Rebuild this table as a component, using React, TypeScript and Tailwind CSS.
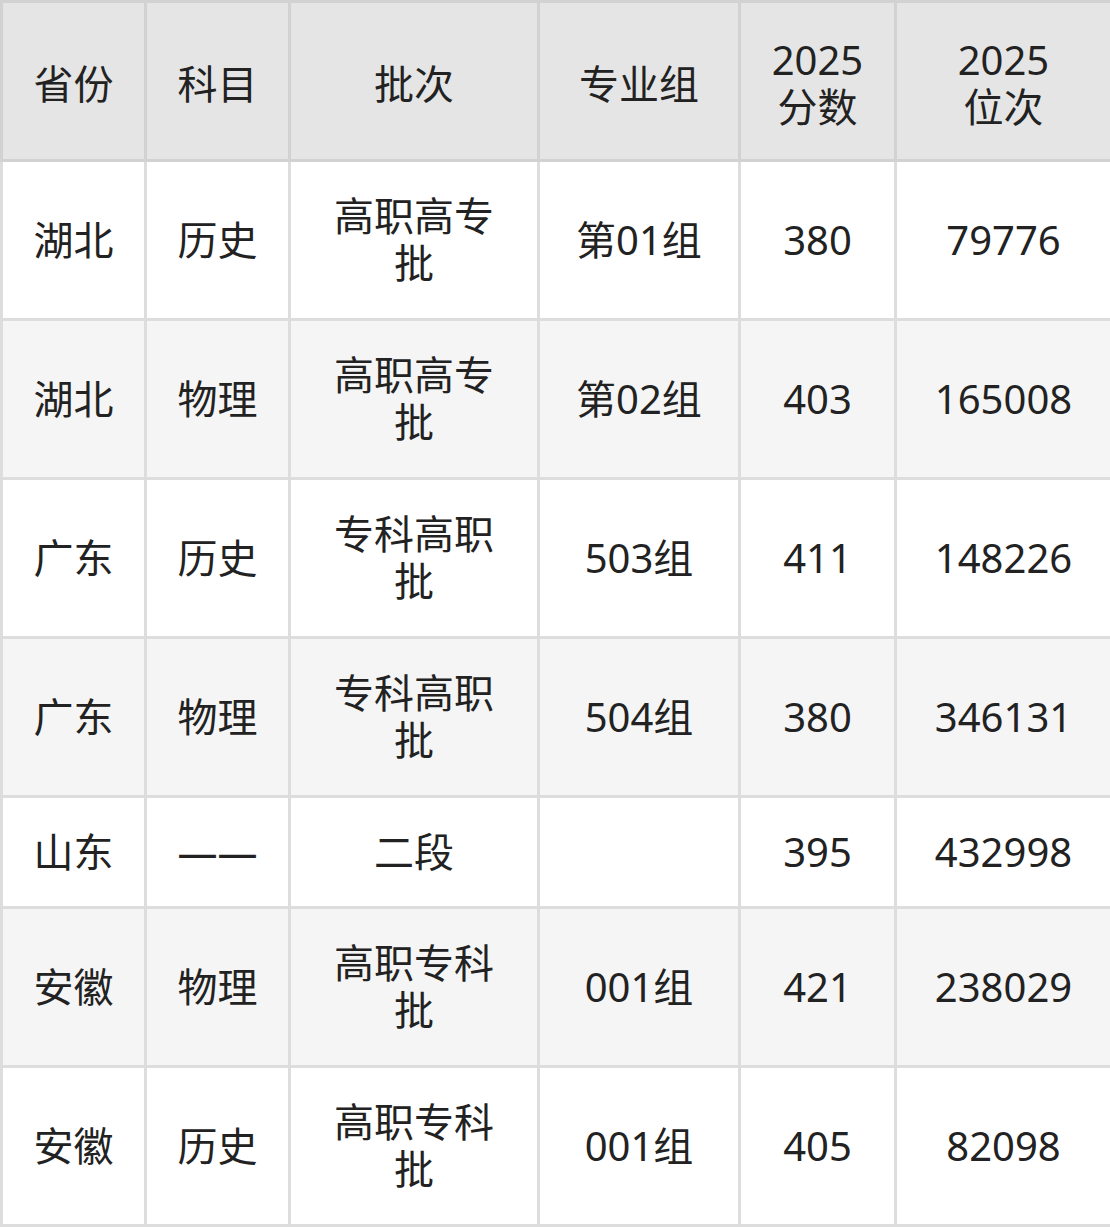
const header = [
  ["省份"],
  ["科目"],
  ["批次"],
  ["专业组"],
  ["2025", "分数"],
  ["2025", "位次"],
];

const rows: string[][][] = [
  [["湖北"], ["历史"], ["高职高专", "批"], ["第01组"], ["380"], ["79776"]],
  [["湖北"], ["物理"], ["高职高专", "批"], ["第02组"], ["403"], ["165008"]],
  [["广东"], ["历史"], ["专科高职", "批"], ["503组"], ["411"], ["148226"]],
  [["广东"], ["物理"], ["专科高职", "批"], ["504组"], ["380"], ["346131"]],
  [["山东"], ["——"], ["二段"], [""], ["395"], ["432998"]],
  [["安徽"], ["物理"], ["高职专科", "批"], ["001组"], ["421"], ["238029"]],
  [["安徽"], ["历史"], ["高职专科", "批"], ["001组"], ["405"], ["82098"]],
];

function Lines({ parts }: { parts: string[] }) {
  return (
    <>
      {parts.map((p, i) => (
        <span key={i} className="block">
          {p}
        </span>
      ))}
    </>
  );
}

export default function App() {
  return (
    <div className="w-[1110px] bg-white font-['Noto_Sans','Noto_Sans_CJK_SC',sans-serif] text-[#222222]">
      <table className="w-[1110px] table-fixed border-collapse text-center text-[40px] leading-[47px]">
        <colgroup>
          <col className="w-[144px]" />
          <col className="w-[144px]" />
          <col className="w-[249px]" />
          <col className="w-[201px]" />
          <col className="w-[156px]" />
          <col className="w-[216px]" />
        </colgroup>
        <thead>
          <tr className="h-[159px] bg-[#e5e5e5]">
            {header.map((h, i) => (
              <th
                key={i}
                className="border-[3px] border-[#d2d2d2] px-1 pt-1 pb-0 align-middle font-normal"
              >
                <Lines parts={h} />
              </th>
            ))}
          </tr>
        </thead>
        <tbody>
          {rows.map((r, ri) => (
            <tr
              key={ri}
              className={`${r[2].length > 1 ? "h-[159px]" : "h-[111px]"} ${
                ri % 2 === 1 ? "bg-[#f5f5f5]" : "bg-white"
              }`}
            >
              {r.map((c, ci) => (
                <td
                  key={ci}
                  className="border-[3px] border-[#dddddd] px-1 pt-0 pb-0.5 align-middle"
                >
                  <Lines parts={c} />
                </td>
              ))}
            </tr>
          ))}
        </tbody>
      </table>
    </div>
  );
}
